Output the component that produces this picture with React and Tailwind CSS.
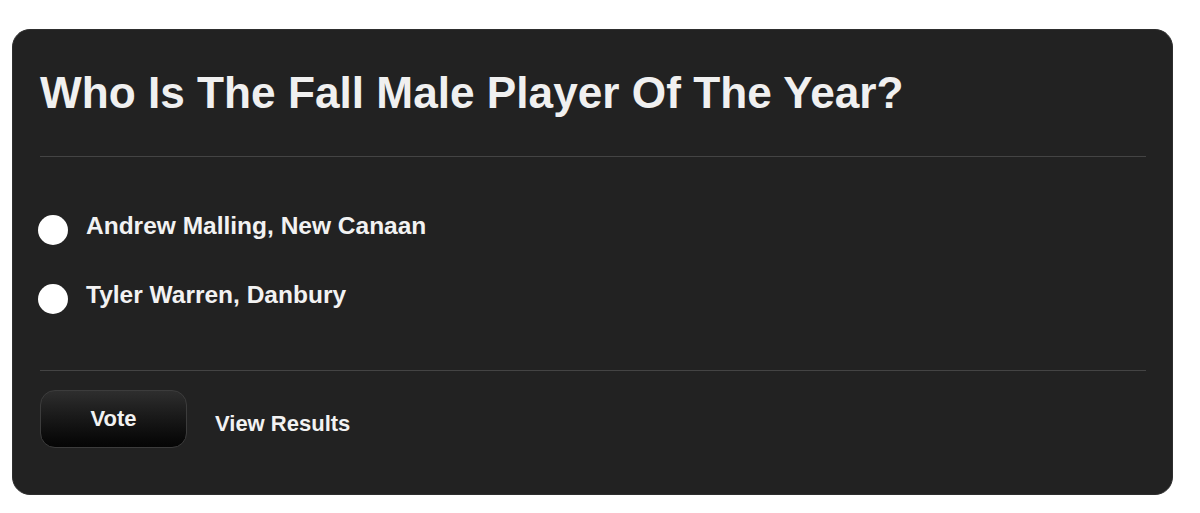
export default function App() {
  const options = ["Andrew Malling, New Canaan", "Tyler Warren, Danbury"];

  return (
    <div className="min-h-screen bg-white pt-[29px] pl-[12px] font-['Liberation_Sans',Arial,sans-serif]">
      {/* Poll card */}
      <div className="w-[1161px] h-[466px] rounded-[18px] bg-[#222222] border border-[#2e2e2e] pt-[39px] pl-[27px] pr-[26px]">
        <h1 className="text-[44.2px] leading-[48px] font-bold text-[#f0f0f0]">
          Who Is The Fall Male Player Of The Year?
        </h1>

        <div className="mt-[39px] h-px bg-[#444444]" />

        {/* Options */}
        <div className="mt-[53px] flex flex-col gap-[29px]">
          {options.map((option) => (
            <label key={option} className="flex h-[40px] items-center -ml-[2px] cursor-pointer">
              <span className="w-[30px] h-[30px] rounded-full bg-white shrink-0" />
              <span className="ml-[18px] mb-[7px] text-[24.5px] font-bold text-[#f2f2f2]">
                {option}
              </span>
            </label>
          ))}
        </div>

        <div className="mt-[51px] h-px bg-[#444444]" />

        {/* Actions */}
        <div className="mt-[19px] flex items-center">
          <button className="w-[147px] h-[58px] rounded-[15px] border border-[#3c3c3c] bg-gradient-to-b from-[#2e2e2e] to-[#050505] text-[22px] font-bold text-[#f2f2f2] pb-[1px]">
            Vote
          </button>
          <a className="ml-[28px] mt-[8px] text-[22px] font-bold text-[#f2f2f2] cursor-pointer">
            View Results
          </a>
        </div>
      </div>
    </div>
  );
}
